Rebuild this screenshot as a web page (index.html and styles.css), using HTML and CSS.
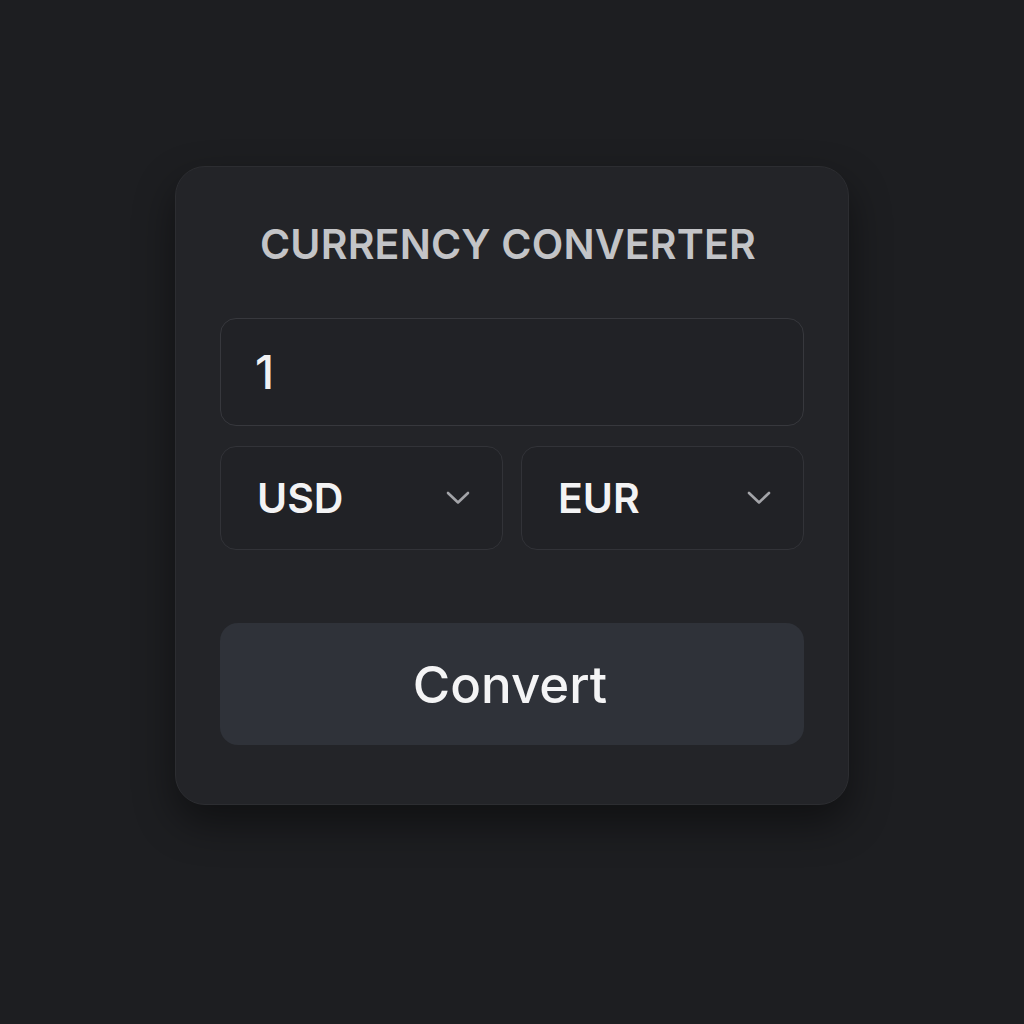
FILE: index.html
```html
<!DOCTYPE html>
<html lang="en">
<head>
<meta charset="utf-8">
<title>Currency Converter</title>
<link rel="stylesheet" href="styles.css">
</head>
<body>
<main class="card">
  <h1 class="title">CURRENCY CONVERTER</h1>
  <div class="amount">1</div>
  <div class="selects">
    <div class="select">
      <span class="code">USD</span>
      <svg class="chev" width="24" height="14" viewBox="0 0 24 14"><path d="M2 2 L12 11.5 L22 2" fill="none" stroke="#a3a4a8" stroke-width="2.6" stroke-linecap="round" stroke-linejoin="round"/></svg>
    </div>
    <div class="select">
      <span class="code">EUR</span>
      <svg class="chev" width="24" height="14" viewBox="0 0 24 14"><path d="M2 2 L12 11.5 L22 2" fill="none" stroke="#a3a4a8" stroke-width="2.6" stroke-linecap="round" stroke-linejoin="round"/></svg>
    </div>
  </div>
  <button class="convert">Convert</button>
</main>
</body>
</html>
```
FILE: styles.css
```css
html, body {
  margin: 0;
  padding: 0;
}
body {
  background: #1d1e21;
  min-height: 1024px;
  font-family: Inter, "Noto Sans", sans-serif;
  overflow: hidden;
}
.card {
  box-sizing: border-box;
  width: 674px;
  height: 639px;
  margin: 166px auto 0;
  background: #232428;
  border: 1px solid #2c2d31;
  border-radius: 30px;
  box-shadow: 0 18px 40px rgba(0, 0, 0, 0.45);
  padding: 53px 44px 0;
  display: flex;
  flex-direction: column;
}
.title {
  margin: 0;
  padding-right: 8px;
  text-align: center;
  font-size: 41px;
  line-height: 49px;
  font-weight: 600;
  letter-spacing: 0.2px;
  color: #c3c4c7;
}
.amount {
  box-sizing: border-box;
  margin-top: 49px;
  height: 108px;
  border: 1.5px solid #37383d;
  border-radius: 16px;
  background: #212226;
  padding-left: 34px;
  display: flex;
  align-items: center;
  font-size: 46px;
  font-weight: 500;
  color: #f1f1f2;
}
.selects {
  margin-top: 20px;
  display: grid;
  grid-template-columns: 1fr 1fr;
  gap: 18px;
}
.select {
  box-sizing: border-box;
  height: 104px;
  border: 1.5px solid #323338;
  border-radius: 16px;
  background: #212226;
  padding: 0 32px 0 36px;
  display: flex;
  align-items: center;
  justify-content: space-between;
}
.code {
  font-size: 41px;
  font-weight: 600;
  color: #f3f3f4;
}
.chev {
  display: block;
}
.convert {
  margin-top: 73px;
  height: 122px;
  border: none;
  border-radius: 18px;
  background: #2f3239;
  color: #f4f4f5;
  font-family: Inter, "Noto Sans", sans-serif;
  font-size: 51px;
  font-weight: 500;
  padding: 0 4px 0 0;
  cursor: pointer;
}
```
